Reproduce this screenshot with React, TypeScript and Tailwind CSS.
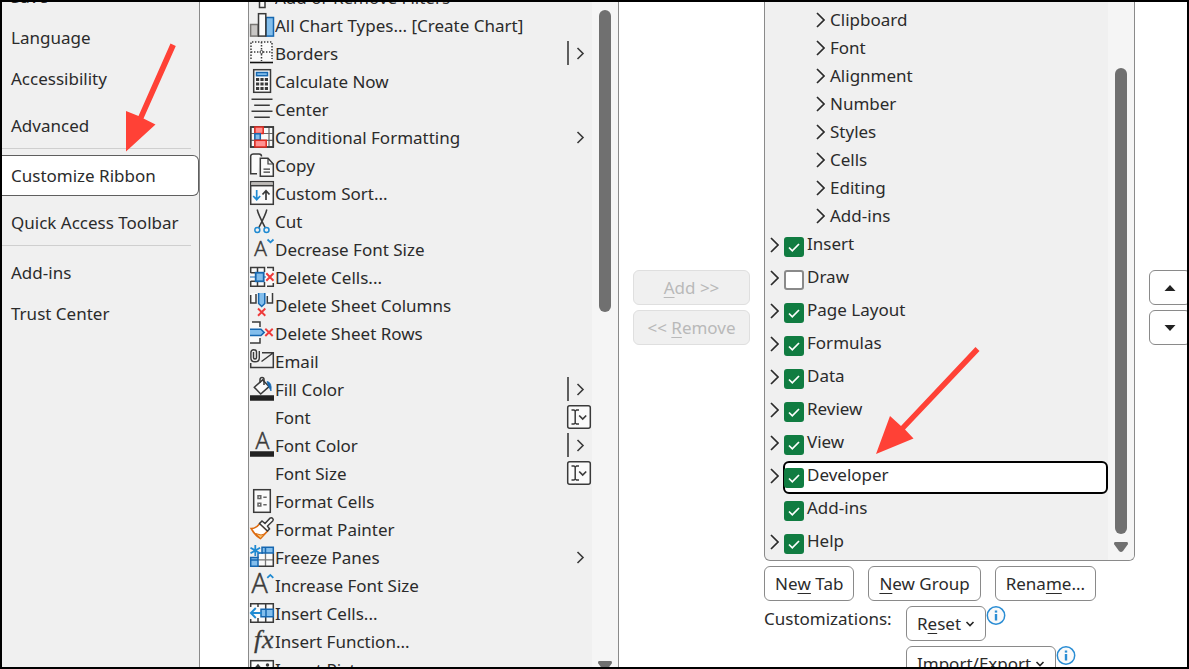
import React from "react";
import type { ReactNode } from "react";

const INK = "#3a3a3a";
const BLUE = "#1f8ad2";
const DEEP = "#1667b0";
const SKY = "#83beec";
const RED = "#ee3b3b";

function Icon({ children }: { children?: ReactNode }) {
  return (
    <svg viewBox="0 0 24 24" className="h-6 w-6 shrink-0 overflow-visible" fill="none" stroke={INK} strokeWidth="1.5" aria-hidden="true">
      {children}
    </svg>
  );
}

function LetterA({ x, y, size }: { x: number; y: number; size: number }) {
  return (
    <text x={x} y={y} fontSize={size} fontFamily="'Open Sans', 'Noto Sans', sans-serif" fontWeight="300" textAnchor="middle" fill={INK} stroke={INK} strokeWidth="0.500">
      A
    </text>
  );
}

const icons: Record<string, ReactNode> = {
  funnel: (
    <Icon>
      <path d="M1 1H23L15 10V22.500H9.500V10Z" fill="#fafafa" />
    </Icon>
  ),
  chart: (
    <Icon>
      <rect x="0.6" y="11.500" width="7.500" height="11.600" fill="#c8c6c4" stroke="#797774" />
      <rect x="16" y="4.500" width="7.500" height="18.600" fill={SKY} stroke={DEEP} />
      <rect x="8.500" y="0.700" width="7.300" height="22.400" fill="#fafafa" />
    </Icon>
  ),
  borders: (
    <Icon>
      <rect x="1" y="1" width="21" height="20" fill="#fafafa" stroke="none" />
      <path d="M1 18V1H22V18M11.500 1V20M1 11H22" strokeDasharray="1.4 1.6" />
      <circle cx="11.500" cy="11" r="1.500" fill="#fafafa" strokeWidth="1" />
      <path d="M0 21.500H23" stroke="#111" strokeWidth="1.600" />
    </Icon>
  ),
  calculator: (
    <Icon>
      <rect x="3.700" y="0.700" width="16.800" height="22.600" fill="#fafafa" />
      <rect x="6.500" y="3.500" width="11" height="3.200" fill={SKY} stroke={DEEP} />
      <path d="M6 10.500H9.200M10.400 10.500H13.600M14.800 10.500H18M6 15H9.200M10.400 15H13.600M14.800 15H18M6 19.500H9.200M10.400 19.500H13.600M14.800 19.500H18" strokeWidth="3" />
    </Icon>
  ),
  center: (
    <Icon>
      <path d="M1.500 2.200H22.500M4.200 8.200H19.800M1.500 14.200H22.500M4.200 20.200H19.800" />
    </Icon>
  ),
  conditional: (
    <Icon>
      <rect x="0.700" y="2" width="22.600" height="20" fill="#fafafa" />
      <path d="M0.700 8.500H23.300M0.700 15.300H23.300M4.800 2V22M19 2V22" strokeWidth="1.200" stroke="#666" />
      <rect x="0.700" y="2" width="22.600" height="20" />
      <rect x="4.900" y="2" width="8.300" height="6.500" fill="#ff9292" stroke="#e02a20" />
      <rect x="4.900" y="8.800" width="5.400" height="6.200" fill={SKY} stroke={DEEP} />
      <rect x="4.900" y="15.300" width="11.300" height="6.700" fill="#ff9292" stroke="#e02a20" />
    </Icon>
  ),
  copy: (
    <Icon>
      <path d="M7 20.800H0.700V3Q1 1 3.500 1H9Q11.500 1 11.500 3.500" fill="#fafafa" />
      <path d="M10.300 23.300V5.300H18L23.300 11V23.300Z" fill="#fafafa" />
      <path d="M18 5.300V11H23.300M13.500 16.200H20M13.500 19.200H20" strokeWidth="1.200" />
    </Icon>
  ),
  sort: (
    <Icon>
      <rect x="0.700" y="0.700" width="22.600" height="22.600" fill="#fafafa" />
      <path d="M1.400 2.700H22.600" stroke="#bebbb8" strokeWidth="2.600" />
      <path d="M0.700 4.700H23.300" />
      <path d="M6.700 9V18.500M3.200 15L6.700 18.700L10.200 15" stroke={BLUE} strokeWidth="1.700" />
      <path d="M16 19V10M12.500 13.500L16 9.700L19.500 13.500" strokeWidth="1.700" />
    </Icon>
  ),
  cut: (
    <Icon>
      <path d="M7.200 0.500Q8 5 15.300 18.800M16.800 0.500Q16 5 8.700 18.800" />
      <circle cx="7.300" cy="21" r="2.500" stroke={BLUE} />
      <circle cx="16.500" cy="21" r="2.500" stroke={BLUE} />
    </Icon>
  ),
  fontDown: (
    <Icon>
      <LetterA x={10.5} y={18.5} size={21} />
      <path d="M17.500 2.500L20.500 5.300L23.500 2.500" stroke={BLUE} strokeWidth="1.800" />
    </Icon>
  ),
  deleteCells: (
    <Icon>
      <rect x="0.700" y="2.500" width="22.600" height="19" fill="#fafafa" stroke="none" />
      <path d="M0.700 8V2.500H14.500V7M7.500 2.500V7M0.700 16V21.300H14.500V17M7.500 17V21.300M0.700 7.700H5M0.700 16.300H5" />
      <path d="M17 2.500H23.300V6M17 21.300H23.300V18" />
      <rect x="5.700" y="7.700" width="8" height="8.600" fill={SKY} stroke={DEEP} strokeWidth="1.800" />
      <path d="M0 12H5M14 12H16" stroke={DEEP} strokeWidth="1.200" />
      <path d="M16.300 8.200L23.500 15.700M23.500 8.200L16.300 15.700" stroke={RED} strokeWidth="2" />
    </Icon>
  ),
  deleteColumns: (
    <Icon>
      <rect x="0.700" y="0" width="22" height="10" fill="#fafafa" stroke="none" />
      <path d="M0.700 2V10H6V1M22.500 0V10H17.300V3" />
      <path d="M8.600 0V10.500L11.700 13.500L14.800 10.500V0" fill={SKY} stroke={DEEP} />
      <path d="M8 15.500L15.300 22.700M15.300 15.500L8 22.700" stroke={RED} strokeWidth="1.900" />
    </Icon>
  ),
  deleteRows: (
    <Icon>
      <rect x="0" y="1" width="10" height="21" fill="#fafafa" stroke="none" />
      <path d="M2 1H10V6M0 22H10V17" />
      <path d="M0 8.200H11L14.200 11.400L11 14.500H0" fill={SKY} stroke={DEEP} />
      <path d="M15.300 7.700L22.700 15M22.700 7.700L15.300 15" stroke={RED} strokeWidth="1.900" />
    </Icon>
  ),
  email: (
    <Icon>
      <path d="M12 3.700H23.300V18.500H0.700V14M11.500 12.500L23 4" />
      <path d="M3.500 3V8.500Q3.500 10 5 10Q6.500 10 6.500 8.500V3Q6.500 0.700 3.800 0.700Q0.900 0.700 0.900 3.500V9Q0.900 12.800 5 12.800Q9.300 12.800 9.300 9V2" strokeWidth="1.400" />
    </Icon>
  ),
  fill: (
    <Icon>
      <path d="M4.300 10.300L12.700 2.900L19 9.600L10.700 17Z" fill="#fafafa" />
      <path d="M10 6V2.500Q10.200 0.500 12 0.500Q14 0.500 14 2.500V8" />
      <path d="M17 4.500Q22 5 21 14L18.500 9Z" fill={DEEP} stroke={DEEP} strokeWidth="0.800" />
      <path d="M0 21H24" stroke="#222" strokeWidth="5.500" />
    </Icon>
  ),
  fontColor: (
    <Icon>
      <LetterA x={12.3} y={16} size={23} />
      <path d="M0 21H24" stroke="#222" strokeWidth="5.500" />
    </Icon>
  ),
  formatCells: (
    <Icon>
      <rect x="3.700" y="0.700" width="16.600" height="22.600" fill="#fafafa" />
      <path d="M8 6.800H10.800V9.600H8ZM8 14.300H10.800V17.100H8ZM13.300 8.200H16.700M13.300 15.700H16.700" stroke="#666" />
    </Icon>
  ),
  painter: (
    <Icon>
      <path d="M1.200 11.500Q6 11.500 10 6.500L17.500 14L10.500 21.500Q5 18.500 1.200 11.500Z" fill="#fff" stroke="#dd6b10" strokeWidth="1.700" />
      <path d="M5.500 16.500L11 18L14.500 17L10.500 21.300Z" fill="#f8ca75" stroke="#dd6b10" strokeWidth="1" />
      <path d="M9.500 6.500L12 4L15 6.500L20 1.200Q21.500 0.300 22.700 1.500Q23.800 2.700 22.700 4L17.500 9L19.500 12L17.500 14Z" fill="#fafafa" />
    </Icon>
  ),
  freeze: (
    <Icon>
      <rect x="8" y="8" width="15.300" height="13.300" fill="#fafafa" stroke="none" />
      <path d="M15.500 8V21.300M8 14.800H23.300" strokeWidth="1.300" stroke="#777" />
      <path d="M8 21.300H23.300V8" />
      <path d="M12 2.200H23.300V8H12ZM0.700 12.500H8V21.300H0.700Z" fill={SKY} stroke={DEEP} />
      <path d="M8 13V8H13M15.500 2.200V8M0.700 15H8" stroke={DEEP} />
      <path d="M5.300 0V11M0.500 2.700L10.100 8.300M10.100 2.700L0.500 8.300" stroke={BLUE} strokeWidth="1.800" />
    </Icon>
  ),
  fontUp: (
    <Icon>
      <LetterA x={9.5} y={19.5} size={27} />
      <path d="M17.300 4.800L20.300 1.900L23.300 4.800" stroke={BLUE} strokeWidth="1.800" />
    </Icon>
  ),
  insertCells: (
    <Icon>
      <rect x="0.700" y="2.700" width="22.600" height="18.600" fill="#fafafa" stroke="none" />
      <path d="M0.700 6V2.700H23.300V21.300H0.700V18M8 2.700V6M15.700 2.700V8M8 17V21.300M15.700 16V21.300" />
      <path d="M11 8.200H23.300V15.800H11Z" fill={SKY} stroke={DEEP} />
      <path d="M16 8.200V15.800" stroke={DEEP} />
      <path d="M11.500 12H1M5.800 7L0.900 12L5.800 17" stroke={BLUE} strokeWidth="1.900" />
    </Icon>
  ),
  fx: (
    <Icon>
      <text y="18.500" fontSize="26" fontFamily="'Liberation Serif', serif" fontStyle="italic" fill={INK} stroke={INK} strokeWidth="0.300">
        <tspan x="4">f</tspan>
        <tspan x="12">x</tspan>
      </text>
    </Icon>
  ),
  picture: (
    <Icon>
      <rect x="0.700" y="3.700" width="22.600" height="17" fill="#fafafa" />
      <circle cx="17.500" cy="8" r="1" fill={INK} />
      <path d="M1 16L8 8L18 20" />
    </Icon>
  ),
  none: <Icon />,
};

type Trail = "menu" | "split" | "edit";

const commands: { label: string; icon: string; trail?: Trail }[] = [
  { label: "Add or Remove Filters", icon: "funnel" },
  { label: "All Chart Types... [Create Chart]", icon: "chart" },
  { label: "Borders", icon: "borders", trail: "split" },
  { label: "Calculate Now", icon: "calculator" },
  { label: "Center", icon: "center" },
  { label: "Conditional Formatting", icon: "conditional", trail: "menu" },
  { label: "Copy", icon: "copy" },
  { label: "Custom Sort...", icon: "sort" },
  { label: "Cut", icon: "cut" },
  { label: "Decrease Font Size", icon: "fontDown" },
  { label: "Delete Cells...", icon: "deleteCells" },
  { label: "Delete Sheet Columns", icon: "deleteColumns" },
  { label: "Delete Sheet Rows", icon: "deleteRows" },
  { label: "Email", icon: "email" },
  { label: "Fill Color", icon: "fill", trail: "split" },
  { label: "Font", icon: "none", trail: "edit" },
  { label: "Font Color", icon: "fontColor", trail: "split" },
  { label: "Font Size", icon: "none", trail: "edit" },
  { label: "Format Cells", icon: "formatCells" },
  { label: "Format Painter", icon: "painter" },
  { label: "Freeze Panes", icon: "freeze", trail: "menu" },
  { label: "Increase Font Size", icon: "fontUp" },
  { label: "Insert Cells...", icon: "insertCells" },
  { label: "Insert Function...", icon: "fx" },
  { label: "Insert Picture...", icon: "picture" },
];

const groups = ["Clipboard", "Font", "Alignment", "Number", "Styles", "Cells", "Editing", "Add-ins"];

const tabs = [
  { label: "Insert", on: true, expandable: true },
  { label: "Draw", on: false, expandable: true },
  { label: "Page Layout", on: true, expandable: true },
  { label: "Formulas", on: true, expandable: true },
  { label: "Data", on: true, expandable: true },
  { label: "Review", on: true, expandable: true },
  { label: "View", on: true, expandable: true },
  { label: "Developer", on: true, expandable: true, selected: true },
  { label: "Add-ins", on: true, expandable: false },
  { label: "Help", on: true, expandable: true },
];

function TrailMark({ kind }: { kind?: Trail }) {
  if (!kind) return null;
  return (
    <Icon>
      {kind === "split" && <path d="M1 0V24" strokeWidth="1.600" />}
      {kind !== "edit" && <path d="M10.500 7L16 12.500L10.500 18" strokeWidth="1.600" />}
      {kind === "edit" && (
        <>
          <rect x="0.700" y="0.700" width="22.600" height="22.600" rx="2" fill="#fafafa" />
          <path d="M4.500 5H7L8.200 6L9.500 5H12M8.200 6V18M4.500 19H7L8.200 18L9.500 19H12" />
          <path d="M12.200 10.500L15.700 14L19.200 10.500" strokeWidth="1.700" />
        </>
      )}
    </Icon>
  );
}

function Expander({ label }: { label: string }) {
  return (
    <button type="button" aria-label={`Expand ${label}`} className="shrink-0">
      <svg viewBox="0 0 10 16" className="h-4 w-[10px]" fill="none" stroke="#2b2b2b" strokeWidth="1.700" aria-hidden="true">
        <path d="M2 1L9 8L2 15" />
      </svg>
    </button>
  );
}

function DownArrow() {
  return (
    <svg viewBox="0 0 14 10" className="h-[10px] w-[14px] shrink-0" fill="#707070" aria-hidden="true">
      <path d="M1 0H13Q14.500 0.800 13.700 2.500L9 9Q7 11 5 9L0.300 2.500Q-0.500 0.800 1 0Z" />
    </svg>
  );
}

function NavItem({ children }: { children: ReactNode }) {
  return (
    <a href="#" className="flex h-[41px] shrink-0 items-center pl-[9px]">
      {children}
    </a>
  );
}

function Key({ children }: { children: ReactNode }) {
  return <span className="underline decoration-1 underline-offset-[3px]">{children}</span>;
}

const actionButton = "flex h-[35px] shrink-0 items-center justify-center rounded-md border border-[#8a8a8a] bg-white px-[10px] whitespace-nowrap";
const moveButton = "flex h-[35px] w-full items-center justify-center rounded-md border border-[#dfdfdf] bg-[#f0f0f0] whitespace-nowrap text-[#b9b9b9]";

function Caret() {
  return (
    <svg viewBox="0 0 10 8" className="ml-1 h-2 w-[10px]" fill="none" stroke="#262626" strokeWidth="1.600" aria-hidden="true">
      <path d="M1.500 2L5 5.500L8.500 2" />
    </svg>
  );
}

function Info() {
  return (
    <svg viewBox="0 0 20 20" className="h-5 w-5 shrink-0" fill="none" stroke="#2a8dd4" strokeWidth="1.500" role="img" aria-label="Information">
      <circle cx="10" cy="9.500" r="8.700" fill="#fafafa" />
      <path d="M10 8V14.500" strokeWidth="2.400" />
      <path d="M10 4.500V6.600" strokeWidth="2.400" />
    </svg>
  );
}

export default function App() {
  return (
    <div className="relative flex h-screen w-full overflow-hidden border-2 border-black bg-white font-['Noto_Sans',sans-serif] text-[17px] leading-7 text-[#2b2b2b]">
      <nav aria-label="Options" className="-mt-[26px] flex w-[198px] shrink-0 flex-col border-r border-[#8a8a8a] bg-[#f0f0f0]">
        <NavItem>Save</NavItem>
        <NavItem>Language</NavItem>
        <NavItem>Accessibility</NavItem>
        <div className="mt-[6px] flex flex-col">
          <NavItem>Advanced</NavItem>
        </div>
        <hr className="mt-[2px] mr-2 border-[#cfcfcf]" />
        <a href="#" aria-current="page" className="my-[6px] flex h-[41px] shrink-0 items-center rounded-r-md border border-l-0 border-[#5f5f5f] bg-white pl-[9px]">
          Customize Ribbon
        </a>
        <NavItem>Quick Access Toolbar</NavItem>
        <hr className="mt-[2px] mr-2 mb-[6px] border-[#cfcfcf]" />
        <NavItem>Add-ins</NavItem>
        <NavItem>Trust Center</NavItem>
      </nav>

      <section aria-label="Commands" className="ml-12 flex min-w-0 flex-1">
        <div className="flex min-w-0 flex-1 overflow-hidden border-x border-[#8a8a8a] bg-[#f0f0f0]">
          <ul className="-mt-[18px] min-w-0 flex-1 pl-px">
            {commands.map((c) => (
              <li key={c.label} className="h-7">
                <button type="button" className="flex h-full w-full items-start pt-px pr-px text-left">
                  {icons[c.icon]}
                  <span className="ml-px flex-1 truncate leading-[26px]">{c.label}</span>
                  <TrailMark kind={c.trail} />
                </button>
              </li>
            ))}
          </ul>
          <div className="-mb-1 flex w-[26px] shrink-0 flex-col items-center justify-between bg-[#f5f5f5] pt-2">
            <div className="h-[302px] w-3 rounded-full bg-[#707070]" />
            <DownArrow />
          </div>
        </div>
      </section>

      <div className="mx-[14px] flex w-[117px] shrink-0 flex-col gap-[5px] pt-[268px]">
        <button type="button" disabled className={moveButton}>
          <Key>A</Key>dd &gt;&gt;
        </button>
        <button type="button" disabled className={moveButton}>
          &lt;&lt;&nbsp;<Key>R</Key>emove
        </button>
      </div>

      <section aria-label="Tabs" className="flex min-w-0 flex-1 flex-col">
        <div className="flex shrink-0 overflow-hidden rounded-b-md border border-t-0 border-[#8a8a8a] bg-[#f0f0f0]">
          <div className="min-w-0 flex-1 pt-1">
            <ul>
              {groups.map((g) => (
                <li key={g} className="flex h-7 items-center gap-[5px] pl-[50px]">
                  <Expander label={g} />
                  <span>{g}</span>
                </li>
              ))}
            </ul>
            <ul>
              {tabs.map((t) => (
                <li key={t.label} className="flex h-[33px] items-start pl-1">
                  <div className="flex h-[30px] w-[14px] items-center">{t.expandable && <Expander label={t.label} />}</div>
                  <label
                    className={
                      t.selected
                        ? "flex h-[33px] flex-1 items-start rounded-md border-2 border-black bg-white"
                        : "flex h-[33px] flex-1 items-start border-2 border-transparent"
                    }
                  >
                    <span className="relative mt-[5px] -ml-px flex h-5 w-5 shrink-0">
                      <input
                        type="checkbox"
                        defaultChecked={t.on}
                        className="peer h-5 w-5 appearance-none rounded-[3px] border-2 border-[#8a8a8a] bg-white checked:border-[#107c41] checked:bg-[#107c41]"
                      />
                      <svg viewBox="0 0 20 20" className="pointer-events-none absolute inset-0 hidden h-5 w-5 peer-checked:block" fill="none" stroke="#fff" strokeWidth="1.700" aria-hidden="true">
                        <path d="M5 10.500L8.300 13.800L15 7" />
                      </svg>
                    </span>
                    <span className="ml-[3px] leading-6">{t.label}</span>
                  </label>
                </li>
              ))}
            </ul>
          </div>
          <div className="flex w-[26px] shrink-0 flex-col items-center justify-between bg-[#f5f5f5] pt-[66px] pb-2">
            <div className="h-[466px] w-3 rounded-full bg-[#707070]" />
            <DownArrow />
          </div>
        </div>

        <div className="mt-[5px] flex shrink-0 gap-[14px]">
          <button type="button" className={actionButton}>Ne<Key>w</Key>&nbsp;Tab</button>
          <button type="button" className={actionButton}><Key>N</Key>ew Group</button>
          <button type="button" className={actionButton}>Rena<Key>m</Key>e...</button>
        </div>

        <div className="mt-[5px] flex shrink-0">
          <div className="w-[142px] shrink-0 leading-[26px]">Customizations:</div>
          <div className="flex flex-col gap-[5px]">
            <div className="flex items-start">
              <button type="button" className={actionButton}>R<Key>e</Key>set<Caret /></button>
              <Info />
            </div>
            <div className="flex items-start">
              <button type="button" className={actionButton}>Import/Ex<Key>p</Key>ort<Caret /></button>
              <Info />
            </div>
          </div>
        </div>
      </section>

      <div className="ml-[14px] flex w-[38px] shrink-0 flex-col gap-[5px] pt-[268px]">
        <button type="button" aria-label="Move up" className="flex h-[35px] w-[42px] items-center justify-center rounded-md border border-[#8a8a8a]">
          <svg viewBox="0 0 12 6" className="h-[6px] w-3" fill="#222" aria-hidden="true"><path d="M0.500 6L6 0L11.500 6Z" /></svg>
        </button>
        <button type="button" aria-label="Move down" className="flex h-[35px] w-[42px] items-center justify-center rounded-md border border-[#8a8a8a]">
          <svg viewBox="0 0 12 6" className="h-[6px] w-3" fill="#222" aria-hidden="true"><path d="M0.500 0L6 6L11.500 0Z" /></svg>
        </button>
      </div>

      <svg viewBox="0 0 50 108" className="pointer-events-none absolute top-[42px] left-[124px] h-[108px] w-[50px] overflow-visible" fill="#ff4136" aria-hidden="true">
        <path d="M44.500 -0.500L49.800 2L17.500 74.500L29.500 80.500L0 107.500V67L12.500 72Z" />
      </svg>
      <svg viewBox="0 0 106 110" className="pointer-events-none absolute top-[345px] left-[873px] h-[110px] w-[106px]" fill="#ff4136" aria-hidden="true">
        <path d="M100.500 0L104.500 4L30 82.500L38.500 91.500L1 107L15 69L26 79Z" />
      </svg>
    </div>
  );
}
